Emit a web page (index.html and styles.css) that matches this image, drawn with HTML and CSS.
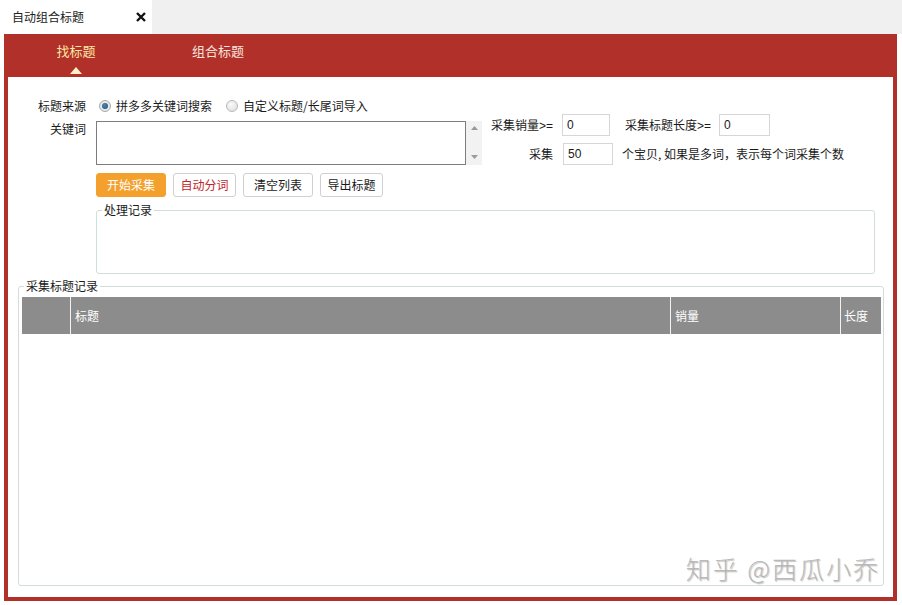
FILE: index.html
```html
<!DOCTYPE html>
<html lang="zh">
<head>
<meta charset="utf-8">
<title>自动组合标题</title>
<link rel="stylesheet" href="styles.css">
</head>
<body>
<div class="tabbar">
  <div class="tab">
    <span class="tab-title">自动组合标题</span>
    <svg class="close" width="12" height="12" viewBox="0 0 12 12"><path d="M2 2 L10 10 M10 2 L2 10" stroke="#111" stroke-width="2.4" stroke-linecap="butt"/></svg>
  </div>
</div>
<div class="frame">
  <div class="head">
    <div class="htab active">找标题<span class="tri"></span></div>
    <div class="htab">组合标题</div>
  </div>
  <div class="content">
    <div class="row source">
      <div class="label">标题来源</div>
      <div class="radios">
        <span class="radio on"></span><span class="rtext">拼多多关键词搜索</span>
        <span class="radio off"></span><span class="rtext">自定义标题/长尾词导入</span>
      </div>
    </div>
    <div class="row kw">
      <div class="label kw-label">关键词</div>
      <div class="ta-wrap">
        <div class="ta"></div>
        <div class="sb">
          <svg width="7" height="4" viewBox="0 0 7 4"><path d="M0 4 L3.5 0 L7 4Z" fill="#9a9a9a"/></svg>
          <svg width="7" height="4" viewBox="0 0 7 4"><path d="M0 0 L3.5 4 L7 0Z" fill="#9a9a9a"/></svg>
        </div>
      </div>
      <div class="params">
        <div class="prow">
          <span class="plabel">采集销量<span class="ge">&gt;=</span></span>
          <span class="input in-a">0</span>
          <span class="plabel2">采集标题长度<span class="ge">&gt;=</span></span>
          <span class="input in-b">0</span>
        </div>
        <div class="prow second">
          <span class="plabel">采集</span>
          <span class="input in-c">50</span>
          <span class="ptext">个宝贝, 如果是多词，表示每个词采集个数</span>
        </div>
      </div>
    </div>
    <div class="buttons">
      <span class="btn primary w70">开始采集</span>
      <span class="btn red w63">自动分词</span>
      <span class="btn w70">清空列表</span>
      <span class="btn w63">导出标题</span>
    </div>
    <fieldset class="log">
      <legend>处理记录</legend>
      <div class="log-body"></div>
    </fieldset>
    <fieldset class="records">
      <legend>采集标题记录</legend>
      <div class="rec-body">
        <div class="thead">
          <div class="th c0"></div>
          <div class="th c1">标题</div>
          <div class="th c2">销量</div>
          <div class="th c3">长度</div>
        </div>
      </div>
    </fieldset>
    <div class="watermark">知乎 @西瓜小乔</div>
  </div>
</div>
</body>
</html>
```
FILE: styles.css
```css
* { box-sizing: border-box; }
html, body {
  margin: 0;
  padding: 0;
  background: #ffffff;
}
body {
  width: 902px;
  height: 605px;
  overflow: hidden;
  font-family: "Noto Sans CJK SC", "Liberation Sans", sans-serif;
  font-size: 12px;
  color: #1a1a1a;
}

.tabbar {
  height: 34px;
  background: #f0f0f0;
  display: flex;
}
.tab {
  width: 152px;
  height: 34px;
  background: #ffffff;
  display: flex;
  align-items: center;
  padding-left: 12px;
}
.tab-title {
  font-size: 12px;
  color: #222;
  line-height: 16px;
}
.close {
  margin-left: 51px;
  display: block;
}

.frame {
  margin-left: 4px;
  width: 893px;
  height: 567px;
  background: #b1302a;
  padding: 0 4px 4px 4px;
  display: flex;
  flex-direction: column;
}
.head {
  height: 43px;
  margin: 0 -4px;
  display: flex;
  padding-left: 1px;
}
.htab {
  width: 142px;
  text-align: center;
  font-size: 13px;
  line-height: 18px;
  padding-top: 8px;
  color: #f7e4dc;
  position: relative;
}
.htab.active { color: #fde7a4; }
.tri {
  position: absolute;
  left: 65px;
  top: 33px;
  width: 0;
  height: 0;
  border-left: 6px solid transparent;
  border-right: 6px solid transparent;
  border-bottom: 7px solid #fdf0c8;
}

.content {
  flex: 1;
  background: #ffffff;
  position: relative;
  padding-top: 21px;
}
.row { display: flex; }
.label {
  width: 78px;
  text-align: right;
  margin-right: 10px;
  line-height: 16px;
}
.source { height: 16px; align-items: center; }
.radios { display: flex; align-items: center; }
.radio {
  width: 12px;
  height: 12px;
  border-radius: 50%;
  border: 1px solid #a9a9a9;
  display: inline-block;
  position: relative;
}
.radio.on {
  margin-left: 3px;
  background: #e8e8e8;
}
.radio.on::after {
  content: "";
  position: absolute;
  left: 2px;
  top: 2px;
  width: 6px;
  height: 6px;
  border-radius: 50%;
  background: radial-gradient(circle at 40% 35%, #4b86b4, #1f4f74);
}
.radio.off {
  margin-left: 14px;
  background: radial-gradient(circle at 40% 35%, #fafafa, #dcdcdc);
  border-color: #b8b8b8;
}
.rtext { margin-left: 5px; line-height: 16px; }

.kw { align-items: flex-start; }
.kw-label { padding-top: 7px; }
.ta-wrap {
  margin-top: 7px;
  width: 386px;
  height: 44px;
  display: flex;
}
.ta {
  flex: 1;
  border: 1px solid #7d7d7d;
  background: #fff;
}
.sb {
  width: 16px;
  background: #f2f2f2;
  display: flex;
  flex-direction: column;
  justify-content: space-between;
  align-items: center;
  padding: 5px 0 6px;
}
.sb svg { display: block; }

.params { margin-left: 9px; }
.prow {
  display: flex;
  align-items: center;
  height: 22px;
  white-space: nowrap;
}
.prow.second { margin-top: 7px; }
.ge {
  font-family: "Liberation Sans", sans-serif;
  font-size: 12px;
}
.plabel {
  width: 62px;
  text-align: right;
  line-height: 16px;
}
.plabel2 {
  margin-left: 15px;
  width: 86px;
  line-height: 16px;
}
.input {
  height: 22px;
  border: 1px solid #d6d6d6;
  padding: 2px 0 0 4px;
  line-height: 16px;
  font-family: "Liberation Sans", sans-serif;
  font-size: 12px;
}
.in-a { margin-left: 9px; width: 48px; }
.in-b { margin-left: 8px; width: 51px; }
.in-c { margin-left: 10px; width: 50px; }
.ptext { margin-left: 9px; line-height: 16px; }

.buttons {
  display: flex;
  gap: 7px;
  margin-top: 8px;
  margin-left: 88px;
}
.btn {
  height: 24px;
  border: 1px solid #d0d0d0;
  border-radius: 3px;
  background: #fff;
  display: flex;
  align-items: center;
  justify-content: center;
  line-height: 16px;
  color: #1a1a1a;
}
.btn.w70 { width: 70px; }
.btn.w63 { width: 63px; }
.btn.primary {
  background: #f4a02c;
  border-color: #f4a02c;
  color: #fff;
}
.btn.red { color: #c0242b; }

fieldset {
  margin: 0;
  padding: 0;
  border: 1px solid #d3dcdc;
  border-radius: 3px;
  min-width: 0;
}
legend {
  padding: 0 2px;
  margin-left: 5px;
  line-height: 16px;
  font-size: 12px;
}
.log {
  margin: 5px 18px 0 88px;
}
.log-body { height: 55px; }
.records {
  margin: 4px 9px 0 10px;
}
.rec-body {
  height: 291px;
  padding: 3px 2px 0 3px;
}
.thead {
  height: 37px;
  background: #8c8c8c;
  display: flex;
  color: #fff;
}
.th {
  line-height: 37px;
  padding-left: 4px;
}
.c0 { width: 48px; }
.c1 { width: 600px; border-left: 1px solid #f2f2f2; }
.c2 { width: 170px; border-left: 1px solid #f2f2f2; }
.c3 { flex: 1; border-left: 1px solid #f2f2f2; padding-left: 3px; }

.watermark {
  position: absolute;
  right: 13px;
  bottom: 14px;
  font-size: 25px;
  line-height: 30px;
  letter-spacing: 2px;
  color: rgba(175, 175, 175, 0.85);
  text-shadow: 1px 1px 1px rgba(90, 90, 90, 0.35);
  font-weight: 300;
}
```
